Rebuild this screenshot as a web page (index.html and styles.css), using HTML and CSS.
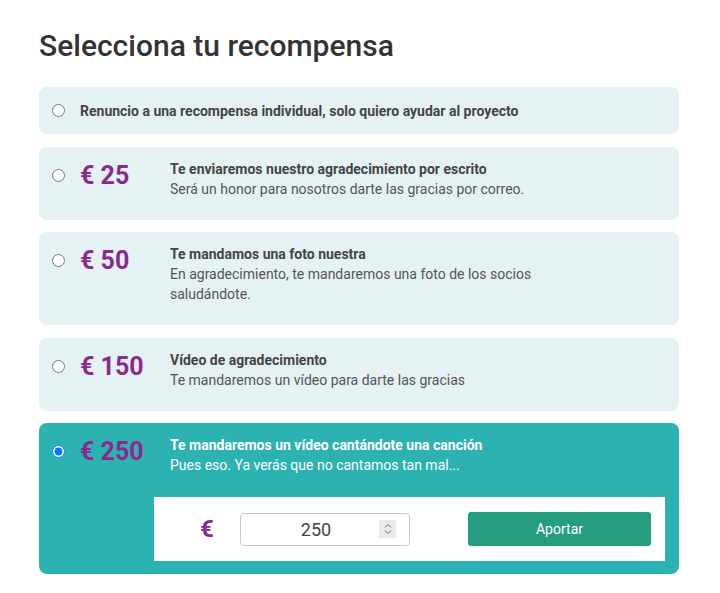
FILE: index.html
```html
<!DOCTYPE html>
<html>
<head>
    <title>Selecciona tu recompensa</title>
    <meta charset="UTF-8">
    <link rel="stylesheet" href="styles.css">
</head>
<body>
    <h1 class="title">Selecciona tu recompensa</h1>

    <div class="rewards">
        <label class="reward reward-none">
            <input type="radio" name="reward">
            <span class="reward-title">Renuncio a una recompensa individual, solo quiero ayudar al proyecto</span>
        </label>

        <label class="reward">
            <input type="radio" name="reward">
            <span class="price">€ 25</span>
            <span class="info">
                <span class="reward-title">Te enviaremos nuestro agradecimiento por escrito</span>
                <span class="reward-desc">Será un honor para nosotros darte las gracias por correo.</span>
            </span>
        </label>

        <label class="reward">
            <input type="radio" name="reward">
            <span class="price">€ 50</span>
            <span class="info">
                <span class="reward-title">Te mandamos una foto nuestra</span>
                <span class="reward-desc">En agradecimiento, te mandaremos una foto de los socios saludándote.</span>
            </span>
        </label>

        <label class="reward">
            <input type="radio" name="reward">
            <span class="price">€ 150</span>
            <span class="info">
                <span class="reward-title">Vídeo de agradecimiento</span>
                <span class="reward-desc">Te mandaremos un vídeo para darte las gracias</span>
            </span>
        </label>

        <div class="reward selected">
            <input type="radio" name="reward" checked>
            <span class="price">€ 250</span>
            <span class="info">
                <span class="reward-title">Te mandaremos un vídeo cantándote una canción</span>
                <span class="reward-desc">Pues eso. Ya verás que no cantamos tan mal...</span>
            </span>

            <div class="contribute">
                <span class="euro">€</span>
                <div class="amount">
                    <span class="amount-value">250</span>
                    <span class="spinner">
                        <svg width="10" height="14" viewBox="0 0 10 14">
                            <path d="M2 5.5 L5 2.5 L8 5.5 M2 8.5 L5 11.5 L8 8.5" fill="none" stroke="#777" stroke-width="1"/>
                        </svg>
                    </span>
                </div>
                <button class="btn-aportar">Aportar</button>
            </div>
        </div>
    </div>
</body>
</html>
```

FILE: styles.css
```css
body {
    margin: 0;
    padding: 25px 41px 18px 39px;
    font-family: Roboto, "Liberation Sans", sans-serif;
    color: #444;
    background: #fff;
}

.title {
    margin: 0 0 20px;
    font-size: 30px;
    font-weight: 500;
    color: #333;
    line-height: 42px;
}

.rewards {
    display: flex;
    flex-direction: column;
    gap: 12.5px;
}

.reward {
    display: grid;
    grid-template-columns: 28px 90px 400px;
    align-items: start;
    padding: 12px 14px 21px 13px;
    background: #e4f2f3;
    border-radius: 8px;
    cursor: pointer;
}

.reward input[type="radio"] {
    margin: 10px 0 0;
    width: 13px;
    height: 13px;
}

.reward-none {
    grid-template-columns: 28px 1fr;
    align-items: center;
    height: 47px;
    box-sizing: border-box;
    padding: 0 14px 0 13px;
}

.reward-none input[type="radio"] {
    margin: 0;
}

.price {
    font-size: 25px;
    font-weight: 700;
    line-height: 34px;
    color: #8b2a8c;
}

.info {
    display: flex;
    flex-direction: column;
    font-size: 14px;
    line-height: 20px;
}

.reward-title {
    font-size: 14px;
    font-weight: 700;
    line-height: 20px;
    color: #444;
}

.reward-desc {
    color: #555;
}

.selected {
    background: #2cb2b0;
    padding-bottom: 13px;
}

.selected .reward-title,
.selected .reward-desc {
    color: #fff;
}

.contribute {
    grid-column: 1 / -1;
    margin: 22px 0 0 102px;
    width: 511px;
    height: 64px;
    box-sizing: border-box;
    background: #fff;
    display: flex;
    align-items: center;
    padding: 0 14px 0 46px;
}

.euro {
    width: 16px;
    font-size: 24px;
    font-weight: 700;
    color: #8b2a8c;
    margin-right: 24px;
}

.amount {
    width: 170px;
    height: 33px;
    box-sizing: border-box;
    border: 1px solid #c9c9c9;
    border-radius: 4px;
    display: flex;
    align-items: center;
    padding: 0 13px 0 0;
}

.amount-value {
    flex: 1;
    text-align: center;
    font-size: 18px;
    color: #444;
    padding-left: 12px;
}

.spinner {
    width: 17px;
    height: 18px;
    background: #e9e9ee;
    display: flex;
    align-items: center;
    justify-content: center;
}

.btn-aportar {
    margin-left: auto;
    width: 183px;
    height: 34px;
    border: none;
    border-radius: 3px;
    background: #279d80;
    color: #fff;
    font-family: Roboto, "Liberation Sans", sans-serif;
    font-size: 14px;
}
```
